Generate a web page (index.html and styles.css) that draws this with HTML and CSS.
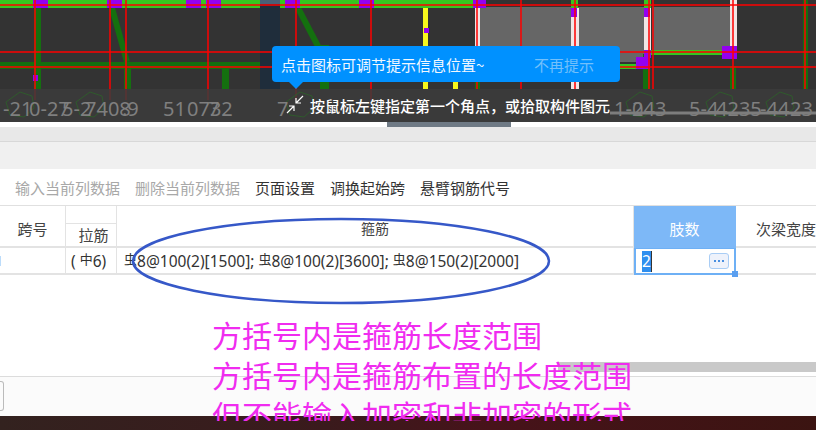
FILE: index.html
```html
<!DOCTYPE html>
<html lang="zh-CN">
<head>
    <meta charset="UTF-8">
    <title>箍筋输入</title>
    <link rel="stylesheet" href="styles.css">
</head>
<body>
    <div class="canvas">
        <svg class="drawing" width="816" height="122" viewBox="0 0 816 122">
            <rect class="panel" x="480" y="7" width="92" height="55"/>
            <rect class="panel" x="578" y="7" width="68" height="55"/>
            <rect class="panel" x="652" y="7" width="80" height="43"/>
            <rect class="shade" x="260" y="4" width="20" height="85"/>
            <rect class="shade-top" x="260" y="0" width="20" height="4"/>

            <rect class="beam" x="34" y="8" width="7" height="81"/>
            <rect class="beam" x="124" y="62" width="7" height="27"/>
            <rect class="beam" x="222" y="68" width="7" height="21"/>
            <rect class="beam" x="0" y="62" width="260" height="7"/>
            <rect class="beam" x="320" y="45" width="9" height="44"/>
            <rect class="beam" x="475" y="82" width="5" height="7"/>
            <rect class="beam" x="643" y="54" width="7" height="35"/>
            <rect class="beam" x="730" y="66" width="6" height="23"/>
            <rect class="beam" x="803" y="0" width="5" height="89"/>
            <path class="beam-line" d="M112 8L127 62"/>
            <path class="beam-line" d="M298 8L320 50"/>

            <rect class="top-beam" x="0" y="0" width="260" height="8"/>
            <rect class="top-beam" x="280" y="0" width="195" height="8"/>
            <rect class="top-beam" x="571" y="0" width="7" height="8"/>
            <rect class="top-beam" x="644" y="0" width="7" height="8"/>
            <rect class="top-beam" x="620" y="64" width="16" height="5"/>
            <rect class="top-beam" x="651" y="50" width="72" height="5"/>

            <rect class="col-white" x="475" y="8" width="5" height="74"/>
            <rect class="col-white" x="571" y="8" width="8" height="81"/>
            <rect class="col-white" x="644" y="8" width="7" height="42"/>
            <rect class="col-white" x="730" y="0" width="7" height="48"/>
            <rect class="col-yellow" x="423" y="8" width="5" height="81"/>
            <rect class="col-yellow" x="453" y="82" width="5" height="7"/>

            <rect class="node" x="33" y="0" width="15" height="8"/>
            <rect class="node" x="107" y="0" width="15" height="8"/>
            <rect class="node" x="186" y="0" width="15" height="8"/>
            <rect class="node" x="206" y="0" width="15" height="8"/>
            <rect class="node" x="285" y="0" width="15" height="8"/>
            <rect class="node" x="359" y="0" width="15" height="8"/>
            <rect class="node" x="473" y="0" width="13" height="8"/>
            <rect class="node" x="33" y="75" width="5" height="6"/>
            <rect class="node" x="424" y="28" width="5" height="5"/>
            <rect class="node" x="571" y="8" width="6" height="9"/>
            <rect class="node" x="644" y="8" width="6" height="9"/>
            <rect class="node" x="636" y="57" width="14" height="12"/>
            <rect class="node" x="644" y="50" width="7" height="8"/>
            <rect class="node" x="722" y="46" width="15" height="13"/>

            <path class="axis" d="M0 5H816M0 52H816M0 67H816"/>
            <path class="axis" d="M35 0V100M110 0V100M126 0V100M208 0V100M296 0V100M371 0V100M477 0V89M521 0V89M575 0V89M649 0V89M653 0V89M733 0V89M805 0V89"/>

            <rect class="hint-bar" x="0" y="89" width="816" height="33"/>
            <g class="bubble">
                <polygon points="20,92 32,96 34,108 24,117 10,115 6,102"/>
                <polygon points="90,92 102,96 104,108 94,117 80,115 76,102"/>
                <polygon points="300,92 312,96 314,108 304,117 290,115 286,102"/>
                <polygon points="640,92 652,96 654,108 644,117 630,115 626,102"/>
                <polygon points="720,92 732,96 734,108 724,117 710,115 706,102"/>
                <polygon points="780,92 792,96 794,108 784,117 770,115 766,102"/>
            </g>
            <g class="grid-label">
                <text x="3" y="116">-21</text>
                <text x="29" y="116">0-27</text>
                <text x="62" y="116">5-2</text>
                <text x="85" y="116">7408</text>
                <text x="122" y="116">.9</text>
                <text x="163" y="116">51</text>
                <text x="187" y="116">0732</text>
                <text x="208" y="116">7</text>
                <text x="277" y="116">7</text>
                <text x="614" y="116">1-0</text>
                <text x="632" y="116">243</text>
                <text x="689" y="116">5-4</text>
                <text x="716" y="116">4235</text>
                <text x="760" y="116">-44</text>
                <text x="790" y="116">23</text>
            </g>
            <path class="axis-faint" d="M610 113H816"/>
        </svg>

        <div class="tip">
            <span>点击图标可调节提示信息位置~</span>
            <span class="tip-off">不再提示</span>
        </div>
        <svg class="move-icon" width="20" height="20" viewBox="0 0 20 20">
            <path d="M17 1L10 8M10 3V8H15"/>
            <path d="M1 18L8 11M3 11H8V16"/>
        </svg>
        <div class="prompt">按鼠标左键指定第一个角点，或拾取构件图元</div>
    </div>

    <div class="canvas-scroll"><div class="canvas-thumb"></div></div>
    <div class="gap-bar"></div>
    <div class="tab-bar"></div>

    <div class="toolbar">
        <span class="tool off">输入当前列数据</span>
        <span class="tool off">删除当前列数据</span>
        <span class="tool">页面设置</span>
        <span class="tool">调换起始跨</span>
        <span class="tool">悬臂钢筋代号</span>
    </div>

    <div class="sheet">
        <div class="head c-span">跨号</div>
        <div class="head c-tie"><div class="head-top"></div><div class="head-sub">拉筋</div></div>
        <div class="head c-stir">箍筋</div>
        <div class="head c-legs">肢数</div>
        <div class="head c-width">次梁宽度</div>

        <div class="cell c-span"></div>
        <div class="cell c-tie">(<span class="bar-mark">中</span>6)</div>
        <div class="cell c-stir"><span class="bar-mark">虫</span>8@100(2)[1500];<span class="bar-mark">虫</span>8@100(2)[3600];<span class="bar-mark">虫</span>8@150(2)[2000]</div>
        <div class="cell c-legs">
            <span class="picked">2</span>
            <span class="more"><i></i><i></i><i></i></span>
            <span class="handle"></span>
        </div>
        <div class="cell c-width"></div>
    </div>

    <div class="blank"></div>
    <div class="sheet-scroll"><div class="sheet-thumb"></div></div>
    <div class="footer"><div class="footer-btn"></div></div>
    <div class="taskbar"></div>

    <svg class="ring" width="440" height="100" viewBox="0 0 440 100">
        <ellipse cx="221" cy="51" rx="208" ry="42"/>
    </svg>
    <div class="note">
        <p>方括号内是箍筋长度范围</p>
        <p>方括号内是箍筋布置的长度范围</p>
        <p>但不能输入加密和非加密的形式</p>
    </div>
</body>
</html>
```

FILE: styles.css
```css
* {
    margin: 0;
    padding: 0;
    box-sizing: border-box;
}

html, body {
    width: 816px;
    height: 430px;
    overflow: hidden;
}

body {
    position: relative;
    display: flex;
    flex-direction: column;
    background-color: white;
    color: #333;
    font-family: "Noto Sans CJK SC", "Noto Sans", sans-serif;
}

/* drawing area */
.canvas {
    position: relative;
    flex: none;
    height: 122px;
    background-color: #333;
    overflow: hidden;
}

.drawing {
    display: block;
}

.panel { fill: #666; }
.shade { fill: #1f2d3b; }
.shade-top { fill: #4a6076; }
.beam { fill: #14700f; }
.beam-line { stroke: #14700f; stroke-width: 6; fill: none; }
.top-beam { fill: #35c71f; }
.col-white { fill: #f0e6e6; }
.col-yellow { fill: #f7f71c; }
.node { fill: #9400f0; }
.axis { stroke: #f00; stroke-width: 1.5; fill: none; }
.axis-faint { stroke: #7d7d7d; stroke-width: 3; fill: none; }
.hint-bar { fill: rgba(60, 60, 60, 0.85); }

.bubble polygon {
    fill: none;
    stroke: #2f5a2c;
    stroke-width: 1;
}

.grid-label text {
    fill: #7f7f7f;
    font-family: "Noto Sans", sans-serif;
    font-size: 20px;
}

.tip {
    position: absolute;
    left: 272px;
    top: 46px;
    width: 348px;
    height: 36px;
    padding-left: 9px;
    display: flex;
    align-items: center;
    background-color: #0091ff;
    border-radius: 4px;
    color: #f2f8ff;
    font-size: 15px;
}

.tip::after {
    content: "";
    position: absolute;
    left: 17px;
    top: 36px;
    border-left: 7px solid transparent;
    border-right: 7px solid transparent;
    border-top: 7px solid #0091ff;
}

.tip-off {
    position: absolute;
    left: 262px;
    color: #73c0fb;
}

.move-icon {
    position: absolute;
    left: 286px;
    top: 95px;
}

.move-icon path {
    fill: none;
    stroke: white;
    stroke-width: 1.2;
}

.prompt {
    position: absolute;
    left: 310px;
    top: 96px;
    color: white;
    font-size: 15px;
    line-height: 20px;
    font-weight: 500;
    white-space: nowrap;
}

.canvas-scroll {
    flex: none;
    height: 5px;
    padding-left: 387px;
    background-color: white;
}

.canvas-thumb {
    width: 124px;
    height: 5px;
    background-color: #6f7a85;
}

.gap-bar {
    flex: none;
    height: 14px;
    background-color: #e8e8e8;
}

.tab-bar {
    flex: none;
    height: 28px;
    border-top: 1px solid #d8d8d8;
    background-color: #f0f0f0;
}

.toolbar {
    flex: none;
    height: 37px;
    padding-left: 15px;
    display: flex;
    align-items: center;
    gap: 15px;
    border-bottom: 1px solid #e0e0e0;
    font-size: 15px;
}

.tool.off {
    color: #a8a8a8;
}

/* table */
.sheet {
    flex: none;
    display: grid;
    grid-template-columns: 66px 51px 517px 102px 80px;
    grid-template-rows: 42px 27px;
    font-size: 15px;
}

.head, .cell {
    border-right: 1px solid #e3e3e3;
    border-bottom: 2px solid #e3e3e3;
    display: flex;
    align-items: center;
}

.head {
    justify-content: center;
    padding-top: 4px;
    color: #444;
}

.head.c-tie {
    flex-direction: column;
    align-items: stretch;
    padding-top: 0;
}

.head-top {
    height: 20px;
    border-bottom: 1px solid #e3e3e3;
}

.head-sub {
    flex: 1;
    padding-left: 5px;
    text-align: center;
    line-height: 22px;
}

.head.c-stir {
    font-size: 14px;
}

.head.c-legs {
    background-color: #7db8f7;
    border-color: #7db8f7;
    color: white;
}

.head.c-width {
    justify-content: flex-start;
    padding-left: 20px;
    border-right: none;
    white-space: nowrap;
}

.cell {
    padding-left: 3px;
    font-family: "Noto Sans", "Noto Sans CJK SC", sans-serif;
    font-size: 15.5px;
    white-space: nowrap;
}

.cell.c-span::before {
    content: "";
    width: 1px;
    height: 10px;
    margin-left: -3px;
    background-color: #bcdcfa;
}

.cell.c-tie {
    padding-left: 5px;
}

.bar-mark {
    font-family: "Noto Sans CJK SC", sans-serif;
    font-size: 13px;
    margin-left: 4px;
    position: relative;
    top: -2px;
}

.cell.c-legs {
    position: relative;
    padding-left: 6px;
    border: 2px solid #6eb0f5;
    border-top-width: 1px;
}

.picked {
    width: 10px;
    height: 21px;
    background-color: #2f8fef;
    border-right: 1px solid #333;
    color: white;
    line-height: 21px;
}

.more {
    position: absolute;
    right: 5px;
    top: 4px;
    width: 20px;
    height: 16px;
    display: flex;
    align-items: center;
    justify-content: center;
    gap: 2px;
    background-color: #eef2fb;
    border: 1px solid #a9cdf5;
    border-radius: 3px;
}

.more i {
    width: 2px;
    height: 2px;
    background-color: #4a8fe0;
}

.handle {
    position: absolute;
    right: -4px;
    bottom: -4px;
    width: 6px;
    height: 6px;
    background-color: #5a9ff0;
}

.cell.c-width {
    border-right: none;
}

.blank {
    flex: none;
    height: 87px;
}

.sheet-scroll {
    flex: none;
    height: 15px;
    padding-left: 558px;
    border-bottom: 1px solid #dcdcdc;
}

.sheet-thumb {
    height: 10px;
    background-color: #c9c9c9;
}

.footer {
    flex: none;
    height: 39px;
    padding-top: 4px;
    background-color: #fbfbfb;
}

.footer-btn {
    width: 4px;
    height: 30px;
    border: 1px solid #bbb;
    border-left: none;
    border-radius: 0 3px 3px 0;
}

.taskbar {
    flex: 1;
    background: linear-gradient(90deg, #33221f, #3a1a1c 40%, #47131a 60%, #3b1411);
}

/* hand-drawn markup over the sheet */
.ring {
    position: absolute;
    left: 120px;
    top: 210px;
}

.ring ellipse {
    fill: none;
    stroke: #3658c8;
    stroke-width: 2.5;
}

.note {
    position: absolute;
    left: 212px;
    top: 314px;
    height: 107px;
    overflow: hidden;
    color: #f02cf0;
    font-size: 30px;
    line-height: 40px;
    white-space: nowrap;
}
```
